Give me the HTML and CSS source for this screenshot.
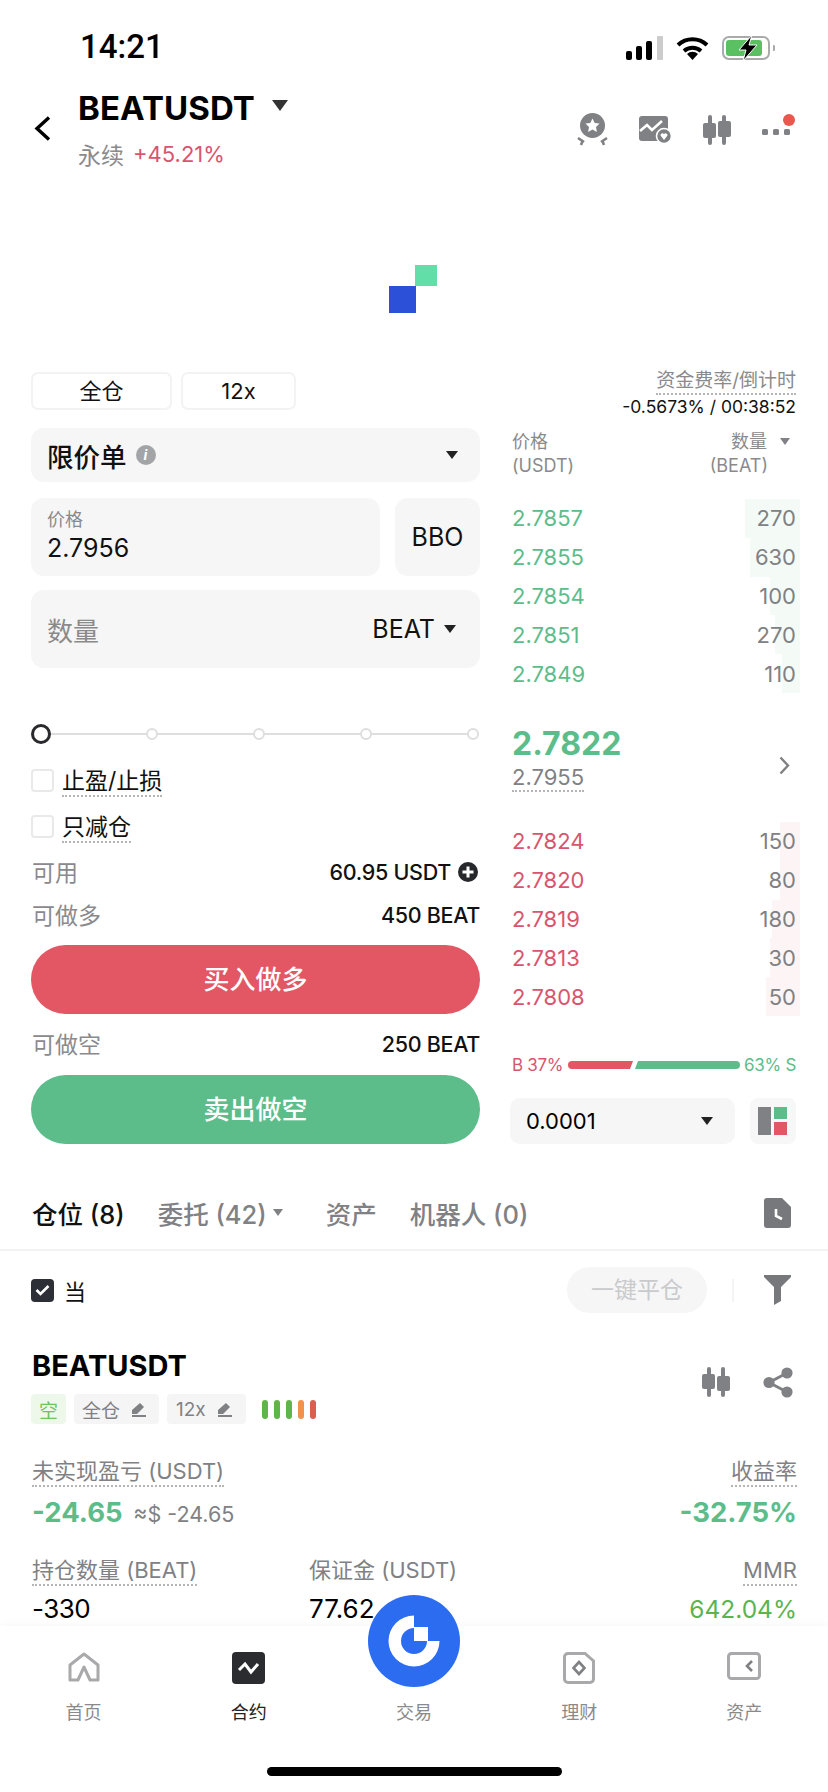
FILE: index.html
```html
<!DOCTYPE html>
<html>

<head>
    <meta charset="utf-8">
    <title>BEATUSDT</title>

    <link rel="stylesheet" href="styles.css">
</head>

<body>

    <div class="status">
        <span class="time">14:21</span>
        <div class="status-icons">
            <svg width="37" height="24" viewBox="0 0 37 24">
                <rect x="0" y="15" width="6" height="9" rx="2" fill="#000" />
                <rect x="10" y="10" width="6" height="14" rx="2" fill="#000" />
                <rect x="20" y="5" width="6" height="19" rx="2" fill="#000" />
                <rect x="31" y="0" width="6" height="24" rx="1" fill="#ccc" />
            </svg>
            <svg width="33" height="24" viewBox="0 0 33 24">
                <path d="M2 9 A21 21 0 0 1 31 9" fill="none" stroke="#000" stroke-width="4" />
                <path d="M8 15 A13 13 0 0 1 25 15" fill="none" stroke="#000" stroke-width="4" />
                <path d="M11 18 A8 8 0 0 1 22 18 L16.5 24 Z" fill="#000" />
            </svg>
            <svg width="53" height="26" viewBox="0 0 53 26">
                <rect x="1" y="2" width="46" height="22" rx="6" fill="none" stroke="#aaa" stroke-width="2" />
                <rect x="4" y="5" width="36" height="16" rx="3" fill="#5bc062" />
                <path d="M51 10 a3 3 0 0 1 0 6 Z" fill="#aaa" />
                <path d="M30 0 L17 15 H24 L21 26 L35 10 H27 Z" fill="#000" stroke="#fff" stroke-width="1" />
            </svg>
        </div>
    </div>

    <div class="head">
        <svg class="back" width="17" height="25" viewBox="0 0 17 25">
            <path d="M15 1.5 L3 12.5 L15 23.5" fill="none" stroke="#000" stroke-width="3.4" />
        </svg>
        <div class="head-title">
            <div class="symbol-row">
                <span class="symbol">BEATUSDT</span>
                <span class="caret caret-lg"></span>
            </div>
            <div class="sub-row">
                <span class="sub-name">永续</span>
                <span class="sub-pct">+45.21%</span>
            </div>
        </div>
        <div class="head-icons">
            <svg width="33" height="33" viewBox="0 0 33 33">
                <circle cx="16.5" cy="12.5" r="12.5" fill="#808184" />
                <path d="M16.5 5.5 L18.7 10 L23.5 10.6 L20 14 L20.9 19 L16.5 16.6 L12.1 19 L13 14 L9.5 10.6 L14.3 10 Z" fill="#fff" />
                <path d="M2 25 L8 29 M5 32 L7 27 M31 25 L25 29 M28 32 L26 27" stroke="#808184" stroke-width="2.6" fill="none" />
            </svg>
            <svg width="33" height="28" viewBox="0 0 33 28">
                <rect x="0" y="0" width="29" height="25" rx="3" fill="#808184" />
                <path d="M1 15 L8 9 L13 14 L23 5" fill="none" stroke="#fff" stroke-width="2.6" />
                <circle cx="25" cy="20" r="7.5" fill="#808184" stroke="#fff" stroke-width="1.6" />
                <path d="M25 24 L21.5 19.5 A2 2 0 0 1 25 18 A2 2 0 0 1 28.5 19.5 Z" fill="#fff" />
            </svg>
            <svg width="30" height="30" viewBox="0 0 30 30">
                <rect x="6" y="0" width="4" height="30" rx="2" fill="#808184" />
                <rect x="1" y="8" width="13" height="15" rx="2" fill="#808184" />
                <rect x="20" y="0" width="4" height="30" rx="2" fill="#808184" />
                <rect x="16" y="6" width="13" height="16" rx="2" fill="#808184" />
            </svg>
            <svg width="33" height="32" viewBox="0 0 33 32">
                <rect x="0" y="15" width="6" height="6" rx="1.5" fill="#808184" />
                <rect x="11" y="15" width="6" height="6" rx="1.5" fill="#808184" />
                <rect x="22" y="15" width="6" height="6" rx="1.5" fill="#808184" />
                <circle cx="27" cy="6" r="6" fill="#e8584e" />
            </svg>
        </div>
    </div>

    <div class="chart">
        <div class="loader">
            <div class="loader-green"></div>
            <div class="loader-blue"></div>
        </div>
    </div>

    <div class="trade">
        <div class="form">
            <div class="modes">
                <div class="mode mode-margin">全仓</div>
                <div class="mode mode-lev">12x</div>
            </div>
            <div class="field field-type">
                <span class="type-name">限价单</span>
                <span class="info">i</span>
                <span class="caret caret-end"></span>
            </div>
            <div class="price-row">
                <div class="field field-price">
                    <div class="price-label">价格</div>
                    <div class="price-value">2.7956</div>
                </div>
                <div class="field field-bbo">BBO</div>
            </div>
            <div class="field field-qty">
                <span class="qty-name">数量</span>
                <span class="qty-unit">BEAT</span>
                <span class="caret"></span>
            </div>
            <div class="slider">
                <span class="knob"></span>
                <span class="stop"></span>
                <span class="stop"></span>
                <span class="stop"></span>
                <span class="stop"></span>
            </div>
            <div class="check-row check-first">
                <span class="check"></span>
                <span class="check-label dotted">止盈/止损</span>
            </div>
            <div class="check-row check-second">
                <span class="check"></span>
                <span class="check-label dotted">只减仓</span>
            </div>
            <div class="info-row info-avail">
                <span class="info-name">可用</span>
                <span class="info-val">60.95 USDT
                    <svg class="plus" width="20" height="20" viewBox="0 0 20 20">
                        <circle cx="10" cy="10" r="10" fill="#26282c" />
                        <path d="M10 4.5 V15.5 M4.5 10 H15.5" stroke="#fff" stroke-width="3" />
                    </svg>
                </span>
            </div>
            <div class="info-row info-long">
                <span class="info-name">可做多</span>
                <span class="info-val">450 BEAT</span>
            </div>
            <div class="btn btn-buy">买入做多</div>
            <div class="info-row info-short">
                <span class="info-name">可做空</span>
                <span class="info-val">250 BEAT</span>
            </div>
            <div class="btn btn-sell">卖出做空</div>
        </div>

        <div class="book">
            <div class="funding">
                <div><span class="funding-name dotted">资金费率/倒计时</span></div>
                <div class="funding-val">-0.5673% / 00:38:52</div>
            </div>
            <div class="book-head">
                <div>价格<br>(USDT)</div>
                <div class="book-head-qty">
                    <div>数量 <span class="caret caret-gray"></span></div>
                    <div class="book-unit">(BEAT)</div>
                </div>
            </div>
            <div class="rows">
                <div class="row ask"><span class="depth" style="width: 55px"></span><span>2.7857</span><span class="qty">270</span></div>
                <div class="row ask"><span class="depth" style="width: 50px"></span><span>2.7855</span><span class="qty">630</span></div>
                <div class="row ask"><span class="depth" style="width: 30px"></span><span>2.7854</span><span class="qty">100</span></div>
                <div class="row ask"><span class="depth" style="width: 25px"></span><span>2.7851</span><span class="qty">270</span></div>
                <div class="row ask"><span class="depth" style="width: 18px"></span><span>2.7849</span><span class="qty">110</span></div>
            </div>
            <div class="mid">
                <div>
                    <div class="mid-price">2.7822</div>
                    <span class="mid-mark dotted">2.7955</span>
                </div>
                <svg class="mid-arrow" width="11" height="19" viewBox="0 0 11 19">
                    <path d="M1.5 1.5 L9 9.5 L1.5 17.5" fill="none" stroke="#808184" stroke-width="2.4" />
                </svg>
            </div>
            <div class="rows">
                <div class="row bid"><span class="depth" style="width: 20px"></span><span>2.7824</span><span class="qty">150</span></div>
                <div class="row bid"><span class="depth" style="width: 20px"></span><span>2.7820</span><span class="qty">80</span></div>
                <div class="row bid"><span class="depth" style="width: 28px"></span><span>2.7819</span><span class="qty">180</span></div>
                <div class="row bid"><span class="depth" style="width: 30px"></span><span>2.7813</span><span class="qty">30</span></div>
                <div class="row bid"><span class="depth" style="width: 34px"></span><span>2.7808</span><span class="qty">50</span></div>
            </div>
            <div class="ratio">
                <span class="ratio-b">B 37%</span>
                <svg width="172" height="8" viewBox="0 0 172 8">
                    <path d="M4 0 H65 L62 8 H4 A4 4 0 0 1 4 0 Z" fill="#e35664" />
                    <path d="M70 0 H168 A4 4 0 0 1 168 8 H67 Z" fill="#5cbd8a" />
                </svg>
                <span class="ratio-s">63% S</span>
            </div>
            <div class="book-tools">
                <div class="tick">
                    <span>0.0001</span>
                    <span class="caret"></span>
                </div>
                <div class="layout-btn">
                    <div class="layout-gray"></div>
                    <div class="layout-side">
                        <div class="layout-green"></div>
                        <div class="layout-red"></div>
                    </div>
                </div>
            </div>
        </div>
    </div>

    <div class="tabs">
        <span class="tab tab-on">仓位 (8)</span>
        <span class="tab tab-orders">委托 (42)</span>
        <span class="caret caret-gray caret-tab"></span>
        <span class="tab tab-assets">资产</span>
        <span class="tab tab-bots">机器人 (0)</span>
        <svg class="tab-doc" width="27" height="30" viewBox="0 0 27 30">
            <path d="M3 0 H18 L27 9 V27 A3 3 0 0 1 24 30 H3 A3 3 0 0 1 0 27 V3 A3 3 0 0 1 3 0 Z" fill="#77787b" />
            <path d="M12 11 V18 L18 21" fill="none" stroke="#fff" stroke-width="2.6" />
        </svg>
    </div>

    <div class="filter-bar">
        <span class="check check-on">
            <svg width="15" height="12" viewBox="0 0 15 12">
                <path d="M1.5 6 L5.5 10 L13.5 2" fill="none" stroke="#fff" stroke-width="2.6" />
            </svg>
        </span>
        <span class="filter-label">当</span>
        <span class="close-all">一键平仓</span>
        <span class="filter-sep"></span>
        <svg width="27" height="30" viewBox="0 0 27 30">
            <path d="M1 0 H26 A1 1 0 0 1 27 2 L17 12 V26 L10 30 V12 L0 2 A1 1 0 0 1 1 0 Z" fill="#77787b" />
        </svg>
    </div>

    <div class="position">
        <div class="pos-top">
            <div>
                <div class="pos-symbol">BEATUSDT</div>
                <div class="tags">
                    <span class="tag tag-short">空</span>
                    <span class="tag tag-margin">全仓
                        <svg width="16" height="15" viewBox="0 0 16 15">
                            <path d="M9 1 L13 5 L6 12 H1 V8 Z M1 13 H15 V15 H1 Z" fill="#808184" />
                        </svg>
                    </span>
                    <span class="tag tag-lev">12x
                        <svg width="16" height="15" viewBox="0 0 16 15">
                            <path d="M9 1 L13 5 L6 12 H1 V8 Z M1 13 H15 V15 H1 Z" fill="#808184" />
                        </svg>
                    </span>
                    <span class="risk">
                        <i class="risk-green"></i><i class="risk-green"></i><i class="risk-green"></i><i class="risk-orange"></i><i class="risk-red"></i>
                    </span>
                </div>
            </div>
            <div class="pos-icons">
                <svg width="30" height="30" viewBox="0 0 30 30">
                    <rect x="6" y="0" width="4" height="30" rx="2" fill="#808184" />
                    <rect x="1" y="7" width="13" height="15" rx="2" fill="#808184" />
                    <rect x="20" y="0" width="4" height="30" rx="2" fill="#808184" />
                    <rect x="16" y="9" width="13" height="15" rx="2" fill="#808184" />
                </svg>
                <svg width="30" height="31" viewBox="0 0 30 31">
                    <path d="M24 6 L6 15.5 L24 25" fill="none" stroke="#808184" stroke-width="3" />
                    <circle cx="24" cy="6" r="5.6" fill="#808184" />
                    <circle cx="6" cy="15.5" r="5.6" fill="#808184" />
                    <circle cx="24" cy="25" r="5.6" fill="#808184" />
                </svg>
            </div>
        </div>
        <div class="stat-row stat-first">
            <span class="stat-name dotted">未实现盈亏 (USDT)</span>
            <span class="stat-name dotted">收益率</span>
        </div>
        <div class="pnl-row">
            <div>
                <span class="pnl">-24.65</span>
                <span class="pnl-usd">≈$ -24.65</span>
            </div>
            <span class="pnl">-32.75%</span>
        </div>
        <div class="stat-grid">
            <div><span class="stat-name dotted">持仓数量 (BEAT)</span></div>
            <div><span class="stat-name">保证金 (USDT)</span></div>
            <div class="stat-end"><span class="stat-name dotted">MMR</span></div>
            <div class="stat-val stat-qty">-330</div>
            <div class="stat-val">77.62</div>
            <div class="stat-val stat-end stat-good">642.04%</div>
        </div>
    </div>

    <div class="nav">
        <div class="nav-item">
            <svg width="32" height="30" viewBox="0 0 32 30">
                <path d="M16 2 L30 13 V28 H22 L16 15 L10 28 H2 V13 Z" fill="none" stroke="#a9a9ab" stroke-width="3" stroke-linejoin="round" />
            </svg>
            <span>首页</span>
        </div>
        <div class="nav-item nav-on">
            <svg width="33" height="32" viewBox="0 0 33 32">
                <rect x="0" y="0" width="33" height="32" rx="4" fill="#2b2c30" />
                <path d="M7 18 L13 12 L19 20 L26 12" fill="none" stroke="#fff" stroke-width="3" />
            </svg>
            <span>合约</span>
        </div>
        <div class="nav-item">
            <div class="nav-gap"></div>
            <span>交易</span>
        </div>
        <div class="nav-item">
            <svg width="32" height="32" viewBox="0 0 32 32">
                <path d="M5 1.5 H22 L30.5 9 V27 A3.5 3.5 0 0 1 27 30.5 H5 A3.5 3.5 0 0 1 1.5 27 V5 A3.5 3.5 0 0 1 5 1.5 Z" fill="none" stroke="#a9a9ab" stroke-width="3" />
                <path d="M16 10 L21.5 16 L16 22 L10.5 16 Z" fill="none" stroke="#808184" stroke-width="2.6" />
            </svg>
            <span>理财</span>
        </div>
        <div class="nav-item">
            <svg width="34" height="28" viewBox="0 0 34 28">
                <rect x="1.5" y="1.5" width="31" height="25" rx="3" fill="none" stroke="#a9a9ab" stroke-width="3" />
                <path d="M25 9 L20 14 L25 19" fill="none" stroke="#808184" stroke-width="2.6" />
            </svg>
            <span>资产</span>
        </div>
        <div class="home-bar"></div>
    </div>

    <div class="trade-btn">
        <svg width="92" height="92" viewBox="0 0 92 92">
            <path d="M46 20.5 A25.5 25.5 0 1 0 71.5 46 H59 A13 13 0 1 1 46 33 Z" fill="#fff" />
            <rect x="46" y="32" width="14" height="14" fill="#fff" />
        </svg>
    </div>

</body>

</html>
```

FILE: styles.css
```css
* {
    box-sizing: border-box;
}

html,
body {
    margin: 0;
    height: 1792px;
    overflow: hidden;
}

body {
    position: relative;
    background: #fff;
    color: #111;
    font-family: Inter, "Noto Sans CJK SC", sans-serif;
}

svg {
    display: block;
    flex: none;
}

.dotted {
    display: inline-block;
    border-bottom: 2px dotted #b5b5b8;
}

.caret {
    display: inline-block;
    width: 0;
    height: 0;
    border-left: 6px solid transparent;
    border-right: 6px solid transparent;
    border-top: 8px solid #222;
}

.caret-lg {
    margin-top: -6px;
    border-left-width: 8px;
    border-right-width: 8px;
    border-top: 11px solid #333;
}

.caret-gray {
    border-top-color: #808184;
    border-left-width: 5px;
    border-right-width: 5px;
    border-top-width: 7px;
    vertical-align: 3px;
    margin-left: 8px;
}

.caret-end {
    margin-left: auto;
    margin-right: 22px;
}

/* status bar */

.status {
    height: 84px;
    padding: 28px 53px 0 80px;
    display: flex;
    justify-content: space-between;
    align-items: flex-start;
}

.time {
    font-family: Roboto, sans-serif;
    font-size: 33px;
    line-height: 38px;
    font-weight: 500;
    color: #000;
}

.status-icons {
    display: flex;
    align-items: center;
    gap: 13px;
    padding-top: 7px;
}

/* header */

.head {
    height: 91px;
    display: flex;
    padding-left: 34px;
}

.back {
    margin-top: 32px;
}

.head-title {
    margin: 4px 0 0 27px;
}

.symbol-row {
    display: flex;
    align-items: center;
    gap: 17px;
    height: 40px;
}

.symbol {
    font-size: 33px;
    font-weight: 700;
    letter-spacing: 0.1px;
    color: #000;
}

.sub-row {
    display: flex;
    align-items: center;
    gap: 9px;
    height: 38px;
    margin-top: 7px;
}

.sub-name {
    font-size: 23px;
    color: #8a8a8d;
}

.sub-pct {
    font-size: 22px;
    color: #d9556e;
}

.head-icons {
    display: flex;
    align-items: center;
    gap: 30px;
    margin-left: auto;
    padding-right: 33px;
}

/* chart placeholder */

.chart {
    height: 185px;
}

.loader {
    width: 48px;
    margin-left: 389px;
    padding-top: 90px;
}

.loader-green {
    width: 22px;
    height: 21px;
    margin-left: 26px;
    background: #62dfa8;
}

.loader-blue {
    width: 27px;
    height: 27px;
    background: #2c50d8;
}

/* order form */

.trade {
    height: 800px;
    padding-left: 31px;
    display: flex;
    gap: 30px;
}

.form {
    width: 449px;
    padding-top: 12px;
}

.modes {
    display: flex;
    gap: 9px;
}

.mode {
    height: 38px;
    border: 2px solid #f3f3f3;
    border-radius: 7px;
    font-size: 22px;
    line-height: 34px;
    text-align: center;
}

.mode-margin {
    width: 141px;
}

.mode-lev {
    width: 115px;
}

.field {
    background: #f6f6f6;
    border-radius: 13px;
    display: flex;
    align-items: center;
}

.field-type {
    height: 54px;
    margin-top: 18px;
    padding-left: 16px;
}

.type-name {
    font-size: 26.5px;
    font-weight: 500;
}

.info {
    width: 20px;
    height: 20px;
    margin-left: 9px;
    border-radius: 50%;
    background: #a3a4a7;
    color: #fff;
    font-size: 14px;
    font-style: italic;
    font-weight: 700;
    line-height: 20px;
    text-align: center;
}

.price-row {
    display: flex;
    gap: 15px;
    margin-top: 16px;
}

.field-price {
    width: 349px;
    height: 78px;
    padding: 10px 0 0 16px;
    display: block;
}

.price-label {
    font-size: 18px;
    line-height: 24px;
    color: #8a8a8d;
}

.price-value {
    font-size: 25px;
    line-height: 32px;
}

.field-bbo {
    width: 85px;
    height: 78px;
    justify-content: center;
    font-size: 25px;
}

.field-qty {
    height: 78px;
    margin-top: 14px;
    padding: 0 24px 0 16px;
}

.qty-name {
    font-size: 26px;
    color: #8a8a8d;
}

.qty-unit {
    margin-left: auto;
    margin-right: 9px;
    font-size: 25px;
}

.slider {
    position: relative;
    display: flex;
    justify-content: space-between;
    align-items: center;
    height: 20px;
    margin-top: 56px;
    padding-right: 1px;
}

.slider::before {
    content: "";
    position: absolute;
    left: 10px;
    right: 5px;
    top: 9px;
    height: 2px;
    background: #dedede;
}

.knob,
.stop {
    position: relative;
    border-radius: 50%;
    background: #fff;
}

.knob {
    width: 20px;
    height: 20px;
    border: 3px solid #2a2a2e;
}

.stop {
    width: 12px;
    height: 12px;
    border: 2px solid #dedede;
}

.check-row {
    display: flex;
    align-items: center;
    gap: 8px;
    height: 23px;
}

.check-first {
    margin-top: 25px;
}

.check-second {
    margin-top: 23px;
}

.check {
    width: 23px;
    height: 23px;
    border: 2px solid #e9e9e9;
    border-radius: 4px;
    flex: none;
}

.check-label {
    margin-top: 3px;
    font-size: 23px;
    line-height: 27px;
}

.info-row {
    height: 28px;
    display: flex;
    justify-content: space-between;
    align-items: center;
}

.info-avail {
    margin-top: 20px;
}

.info-long {
    margin-top: 15px;
}

.info-short {
    margin-top: 16px;
}

.info-name {
    padding: 0 0 3px 1px;
    font-size: 23px;
    color: #8a8a8d;
}

.info-val {
    display: flex;
    align-items: center;
    gap: 7px;
    font-size: 21.5px;
    font-weight: 500;
    letter-spacing: -0.3px;
}

.plus {
    margin-right: 2px;
}

.btn {
    height: 69px;
    border-radius: 35px;
    color: #fff;
    font-size: 26px;
    font-weight: 500;
    line-height: 69px;
    text-align: center;
}

.btn-buy {
    margin-top: 16px;
    background: #e35664;
}

.btn-sell {
    margin-top: 17px;
    background: #5cbd8a;
}

/* order book */

.book {
    width: 286px;
    padding-top: 6px;
    font-size: 22px;
}

.funding {
    text-align: right;
}

.funding-name {
    font-size: 19px;
    line-height: 24px;
    color: #8a8a8d;
}

.funding-val {
    font-size: 17.5px;
    line-height: 23px;
}

.book-head {
    display: flex;
    justify-content: space-between;
    margin-top: 12px;
    padding-left: 2px;
    font-size: 18px;
    line-height: 24px;
    color: #8a8a8d;
}

.book-head-qty {
    text-align: right;
    padding-right: 6px;
}

.book-unit {
    padding-right: 22px;
}

.rows {
    margin-top: 21px;
}

.mid + .rows {
    margin-top: 0;
}

.row {
    position: relative;
    display: flex;
    justify-content: space-between;
    align-items: center;
    height: 38.8px;
    padding-left: 2px;
    font-size: 22px;
}

.row span {
    position: relative;
}

.row .depth {
    position: absolute;
    top: 0;
    bottom: 0;
    right: -4px;
}

.ask {
    color: #5cbd8a;
}

.ask .depth {
    background: #f4fbf7;
}

.bid {
    color: #d9556e;
}

.bid .depth {
    background: #fdf5f5;
}

.row .qty {
    color: #808184;
}

.mid {
    height: 129px;
    padding: 36px 6px 34px 2px;
    display: flex;
    justify-content: space-between;
    align-items: center;
}

.mid-price {
    font-size: 32px;
    line-height: 40px;
    font-weight: 700;
    color: #5cbd8a;
}

.mid-mark {
    font-size: 22px;
    line-height: 26px;
    color: #808184;
}

.mid-arrow {
    margin-top: 14px;
}

.ratio {
    display: flex;
    justify-content: space-between;
    align-items: center;
    height: 24px;
    margin-top: 37px;
    padding-left: 2px;
    font-size: 17px;
    letter-spacing: -0.3px;
}

.ratio-b {
    color: #d9556e;
}

.ratio-s {
    color: #5cbd8a;
}

.book-tools {
    display: flex;
    gap: 15px;
    margin-top: 21px;
}

.tick {
    width: 225px;
    height: 46px;
    padding: 0 22px 0 16px;
    border-radius: 10px;
    background: #f6f6f6;
    display: flex;
    justify-content: space-between;
    align-items: center;
    font-size: 22px;
    color: #000;
}

.layout-btn {
    width: 46px;
    height: 46px;
    padding: 9px 8px;
    border-radius: 8px;
    background: #f7f7f7;
    display: flex;
    gap: 3px;
}

.layout-gray {
    width: 13px;
    background: #808184;
}

.layout-side {
    width: 13px;
    display: flex;
    flex-direction: column;
    justify-content: space-between;
}

.layout-green {
    height: 12px;
    background: #5cbd8a;
}

.layout-red {
    height: 13px;
    background: #e35664;
}

/* tabs */

.tabs {
    height: 91px;
    padding: 16px 37px 0 32px;
    display: flex;
    align-items: center;
    border-bottom: 2px solid #f2f2f2;
}

.tab {
    font-size: 25.5px;
    font-weight: 500;
    color: #808184;
}

.tab-on {
    color: #111;
}

.tab-orders {
    margin-left: 33px;
}

.caret-tab {
    margin-left: 6px;
    vertical-align: 0;
}

.tab-assets {
    margin-left: 43px;
}

.tab-bots {
    margin-left: 33px;
}

.tab-doc {
    margin-left: auto;
}

/* position card */

.filter-bar {
    height: 46px;
    margin-top: 16px;
    padding: 0 37px 0 31px;
    display: flex;
    align-items: center;
}

.check-on {
    border: 0;
    background: #2d2f36;
    display: flex;
    align-items: center;
    justify-content: center;
}

.filter-label {
    margin-left: 10px;
    font-size: 22px;
}

.close-all {
    width: 140px;
    height: 46px;
    margin-left: auto;
    border-radius: 23px;
    background: #f6f6f6;
    color: #c9cacc;
    font-size: 23px;
    line-height: 46px;
    text-align: center;
}

.filter-sep {
    width: 2px;
    height: 23px;
    margin: 0 30px 0 25px;
    background: #f4f4f4;
}

.position {
    padding: 35px 31px 0 32px;
}

.pos-top {
    display: flex;
    justify-content: space-between;
}

.pos-symbol {
    font-size: 29px;
    line-height: 36px;
    font-weight: 700;
    color: #000;
}

.pos-icons {
    display: flex;
    gap: 32px;
    padding: 19px 4px 0 0;
}

.tags {
    display: flex;
    align-items: center;
    gap: 8px;
    margin: 10px 0 0 -1px;
}

.tag {
    height: 30px;
    display: flex;
    align-items: center;
    gap: 11px;
    border-radius: 4px;
    background: #f5f5f5;
    color: #808184;
    font-size: 19px;
}

.tag-short {
    width: 35px;
    justify-content: center;
    background: #eef8ea;
    color: #73c25b;
}

.tag-margin {
    width: 85px;
    padding-left: 8px;
}

.tag-lev {
    width: 79px;
    padding-left: 9px;
}

.risk {
    display: flex;
    gap: 6px;
    margin-left: 8px;
}

.risk i {
    width: 6px;
    height: 19px;
    border-radius: 3px;
}

.risk-green {
    background: #5fb54a;
}

.risk-orange {
    background: #f0914e;
}

.risk-red {
    background: #db5f4e;
}

.stat-row {
    display: flex;
    justify-content: space-between;
}

.stat-first {
    margin-top: 33px;
}

.stat-name {
    font-size: 22px;
    line-height: 28px;
    color: #808184;
}

.pnl-row {
    display: flex;
    justify-content: space-between;
    align-items: baseline;
    margin-top: 7px;
    line-height: 36px;
}

.pnl {
    font-size: 27.5px;
    font-weight: 700;
    color: #5cbd8a;
}

.pnl-usd {
    margin-left: 6px;
    font-size: 21.5px;
    color: #808184;
}

.stat-grid {
    display: grid;
    grid-template-columns: 277px 1fr 1fr;
    margin-top: 22px;
}

.stat-end {
    text-align: right;
}

.stat-val {
    margin-top: 7px;
    font-size: 26px;
    line-height: 32px;
    color: #000;
}

.stat-qty {
    letter-spacing: -0.5px;
}

.stat-good {
    font-size: 24.5px;
    color: #5bb450;
}

/* bottom nav */

.nav {
    position: absolute;
    left: 0;
    right: 0;
    bottom: 0;
    height: 166px;
    padding: 26px 1px 0;
    display: flex;
    justify-content: space-around;
    background: #fff;
    box-shadow: 0 -2px 8px rgba(0, 0, 0, 0.03);
}

.nav-item {
    width: 165px;
    height: 74px;
    display: flex;
    flex-direction: column;
    align-items: center;
    justify-content: space-between;
    font-size: 18px;
    line-height: 26px;
    color: #8a8a8d;
}

.nav-on {
    color: #222;
}

.nav-gap {
    height: 32px;
}

.home-bar {
    position: absolute;
    left: 267px;
    bottom: 16px;
    width: 295px;
    height: 9px;
    border-radius: 5px;
    background: #000;
}

.trade-btn {
    position: absolute;
    left: 368px;
    top: 1595px;
    width: 92px;
    height: 92px;
    border-radius: 50%;
    background: #2b6cf0;
}
```
